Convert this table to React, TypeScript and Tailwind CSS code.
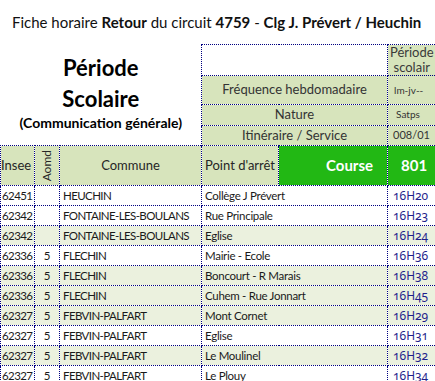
const rows = [
  { insee: '62451', aomd: '', commune: 'HEUCHIN', arret: 'Collège J Prévert', heure: '16H20', alt: false },
  { insee: '62342', aomd: '', commune: 'FONTAINE-LES-BOULANS', arret: 'Rue Principale', heure: '16H23', alt: false },
  { insee: '62342', aomd: '', commune: 'FONTAINE-LES-BOULANS', arret: 'Eglise', heure: '16H24', alt: true },
  { insee: '62336', aomd: '5', commune: 'FLECHIN', arret: 'Mairie - Ecole', heure: '16H36', alt: false },
  { insee: '62336', aomd: '5', commune: 'FLECHIN', arret: 'Boncourt - R Marais', heure: '16H38', alt: true },
  { insee: '62336', aomd: '5', commune: 'FLECHIN', arret: 'Cuhem - Rue Jonnart', heure: '16H45', alt: true },
  { insee: '62327', aomd: '5', commune: 'FEBVIN-PALFART', arret: 'Mont Cornet', heure: '16H29', alt: true },
  { insee: '62327', aomd: '5', commune: 'FEBVIN-PALFART', arret: 'Eglise', heure: '16H31', alt: false },
  { insee: '62327', aomd: '5', commune: 'FEBVIN-PALFART', arret: 'Le Moulinel', heure: '16H32', alt: true },
  { insee: '62327', aomd: '5', commune: 'FEBVIN-PALFART', arret: 'Le Plouy', heure: '16H34', alt: false },
];

const cell = 'border border-dotted border-[#000080] p-0 whitespace-nowrap overflow-hidden';

export default function App() {
  return (
    <div className="w-[435px] h-[381px] overflow-hidden bg-white text-[#1a1a1a] font-['Lato','Liberation_Sans',sans-serif]">
      <div className="h-[44px] flex items-center pl-[12px] text-[15px] text-[#111] whitespace-nowrap">
        <span>
          Fiche horaire <b>Retour</b> du circuit <b>4759</b> - <b>Clg J. Prévert / Heuchin</b>
        </span>
      </div>
      <table className="table-fixed border-collapse w-[440px] text-[12px]">
        <colgroup>
          <col className="w-[34px]" />
          <col className="w-[25px]" />
          <col className="w-[142px]" />
          <col className="w-[77px]" />
          <col className="w-[109px]" />
          <col className="w-[53px]" />
        </colgroup>
        <tbody>
          <tr className="h-[29px]">
            <td colSpan={3} rowSpan={4} className="p-0 text-center align-middle text-black whitespace-nowrap">
              <div className="font-bold text-[22px] leading-[31px]">Période</div>
              <div className="font-bold text-[22px] leading-[31px]">Scolaire</div>
              <div className="font-bold text-[14px] leading-[18px] pb-[6px]">(Communication générale)</div>
            </td>
            <td colSpan={2} className={cell}></td>
            <td className="p-0 pr-[5px] bg-[#d7e4bc] text-[#3a3a3a] text-[13px] leading-[15px] text-center border-t border-dotted border-[#000080]">
              Période scolair
            </td>
          </tr>
          <tr className="h-[29px]">
            <td colSpan={2} className={`${cell} bg-[#d7e4bc] text-center text-[13px] text-[#333]`}>
              Fréquence hebdomadaire
            </td>
            <td className={`${cell} bg-[#d7e4bc] text-[10px] text-[#333] text-left pl-[6px]`}>lm-jv--</td>
          </tr>
          <tr className="h-[20px]">
            <td colSpan={2} className={`${cell} bg-[#d7e4bc] text-center text-[13px] text-[#333]`}>
              Nature
            </td>
            <td className={`${cell} bg-[#d7e4bc] text-[10px] text-[#333] text-left pl-[8px]`}>Satps</td>
          </tr>
          <tr className="h-[20px]">
            <td colSpan={2} className={`${cell} bg-[#d7e4bc] text-center text-[13px] text-[#333]`}>
              Itinéraire / Service
            </td>
            <td className={`${cell} bg-[#d7e4bc] text-[11px] text-[#333] text-left pl-[5px]`}>008/01</td>
          </tr>
          <tr className="h-[40px] text-[13px] text-[#262626]">
            <td className={`${cell} bg-[#d7e4bc] text-left`}>Insee</td>
            <td className={`${cell} bg-[#d7e4bc]`}>
              <div className="flex justify-center items-center">
                <span className="[writing-mode:vertical-rl] rotate-180 text-[12px] leading-none">Aomd</span>
              </div>
            </td>
            <td className={`${cell} bg-[#d7e4bc] text-center`}>Commune</td>
            <td className={`${cell} bg-[#d7e4bc] text-left pl-[3px]`}>Point d'arrêt</td>
            <td className={`${cell} bg-[#22b814] text-white font-bold text-[15px] text-right pr-[14px]`}>Course</td>
            <td className={`${cell} bg-[#22b814] text-white font-bold text-[15px] text-left pl-[13px]`}>801</td>
          </tr>
          {rows.map((r, i) => (
            <tr key={i} className={`h-[20px] text-[11.5px] tracking-[-0.3px] ${r.alt ? 'bg-[#ebf1de]' : 'bg-white'}`}>
              <td className={`${cell} text-left pl-[1px] tracking-[-0.6px]`}>{r.insee}</td>
              <td className={`${cell} text-center`}>{r.aomd}</td>
              <td className={`${cell} text-left pl-[3px] tracking-[-0.6px]`}>{r.commune}</td>
              <td colSpan={2} className={`${cell} text-left pl-[3px]`}>{r.arret}</td>
              <td className={`${cell} text-left pl-[5px] text-[12px] tracking-normal text-[#1f1f8c] font-['Noto_Sans',sans-serif] [font-variant-numeric:oldstyle-nums]`}>{r.heure}</td>
            </tr>
          ))}
        </tbody>
      </table>
    </div>
  );
}
